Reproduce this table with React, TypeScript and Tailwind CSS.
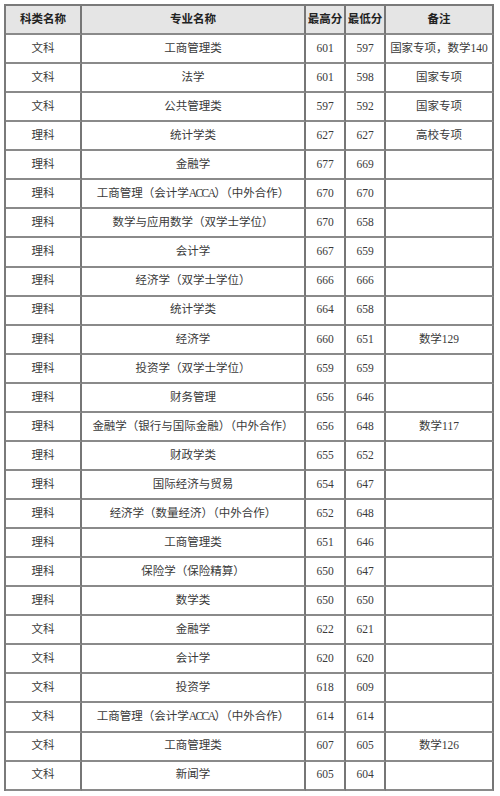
const rows: [string, string, string, string, string][] = [
  ["文科", "工商管理类", "601", "597", "国家专项，数学140"],
  ["文科", "法学", "601", "598", "国家专项"],
  ["文科", "公共管理类", "597", "592", "国家专项"],
  ["理科", "统计学类", "627", "627", "高校专项"],
  ["理科", "金融学", "677", "669", ""],
  ["理科", "工商管理（会计学ACCA）（中外合作）", "670", "670", ""],
  ["理科", "数学与应用数学（双学士学位）", "670", "658", ""],
  ["理科", "会计学", "667", "659", ""],
  ["理科", "经济学（双学士学位）", "666", "666", ""],
  ["理科", "统计学类", "664", "658", ""],
  ["理科", "经济学", "660", "651", "数学129"],
  ["理科", "投资学（双学士学位）", "659", "659", ""],
  ["理科", "财务管理", "656", "646", ""],
  ["理科", "金融学（银行与国际金融）（中外合作）", "656", "648", "数学117"],
  ["理科", "财政学类", "655", "652", ""],
  ["理科", "国际经济与贸易", "654", "647", ""],
  ["理科", "经济学（数量经济）（中外合作）", "652", "648", ""],
  ["理科", "工商管理类", "651", "646", ""],
  ["理科", "保险学（保险精算）", "650", "647", ""],
  ["理科", "数学类", "650", "650", ""],
  ["文科", "金融学", "622", "621", ""],
  ["文科", "会计学", "620", "620", ""],
  ["文科", "投资学", "618", "609", ""],
  ["文科", "工商管理（会计学ACCA）（中外合作）", "614", "614", ""],
  ["文科", "工商管理类", "607", "605", "数学126"],
  ["文科", "新闻学", "605", "604", ""],
]

const headers = ["科类名称", "专业名称", "最高分", "最低分", "备注"]

const cell =
  "flex h-[29.07px] items-center justify-center whitespace-nowrap border-r-2 border-b-2 border-r-[#767676] border-b-[#8a8a8a]"

// the source font sets latin capitals narrow, squeeze "ACCA" a little
const renderText = (v: string) => {
  const parts = v.split("ACCA")
  if (parts.length === 1) return v
  return (
    <>
      {parts[0]}
      <span className="tracking-[-1.5px]">ACCA</span>
      {parts[1]}
    </>
  )
}

export default function App() {
  return (
    <div
      className="min-h-[796px] w-[500px] bg-white pt-[4px] pl-[4px] text-[11.5px] text-[#3a3a3a]"
      style={{ fontFamily: '"Liberation Serif", "Noto Sans CJK SC", serif' }}
    >
      <div className="grid w-[490px] grid-cols-[76px_224px_40px_40px_108px] border-t-2 border-l-2 border-[#7a7a7a]">
        {headers.map((h) => (
          <div key={h} className={`${cell} h-[29px] bg-[#e5e5e5] font-bold text-[#222]`}>
            {h}
          </div>
        ))}
        {rows.map((r, i) =>
          r.map((v, j) => (
            <div key={`${i}-${j}`} className={cell}>
              {renderText(v)}
            </div>
          ))
        )}
      </div>
    </div>
  )
}
